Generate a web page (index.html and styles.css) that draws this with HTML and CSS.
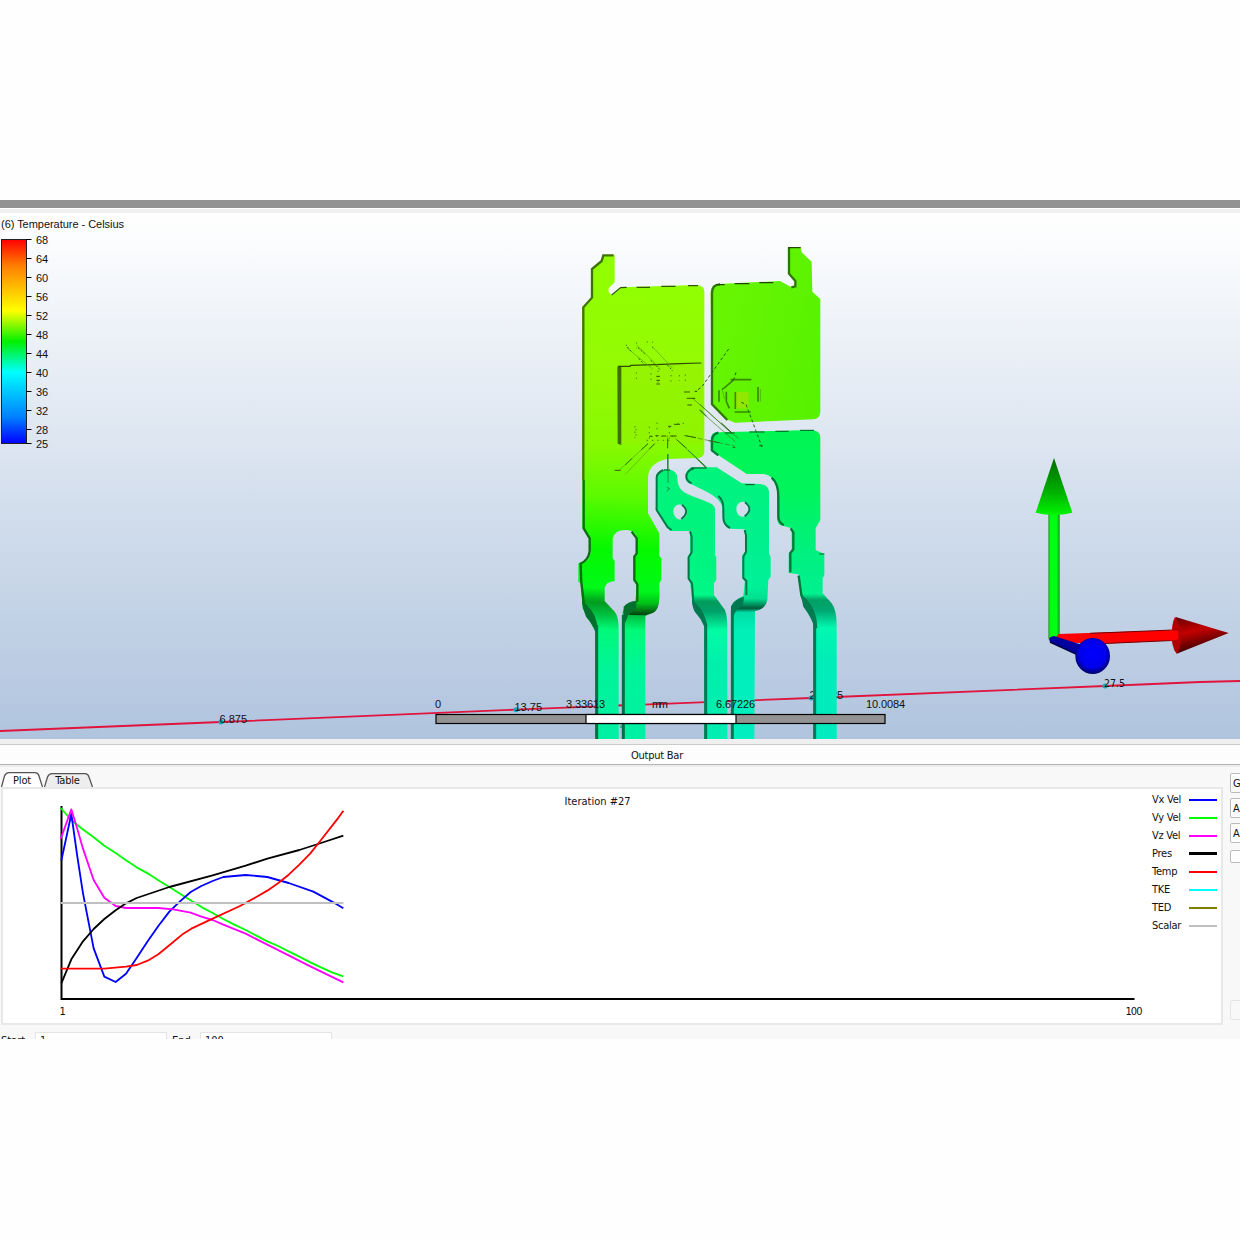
FILE: index.html
```
<!DOCTYPE html>
<html lang="en">
<head>
<meta charset="utf-8">
<title>Temperature results</title>
<link rel="stylesheet" href="styles.css">
</head>
<body>
<main class="app">
  <div class="titlebar"></div>
  <div class="toolstrip"></div>
  <section class="viewport">
    <svg class="scene" viewBox="0 213 1240 526">
      <defs>
        <linearGradient id="scale" x1="0" y1="0" x2="0" y2="1">
          <stop offset="0" stop-color="#f00"/><stop offset=".13" stop-color="#ff8000"/><stop offset=".35" stop-color="#ff0"/><stop offset=".5" stop-color="#00f000"/><stop offset=".65" stop-color="#0ff"/><stop offset=".87" stop-color="#0080ff"/><stop offset="1" stop-color="#00f"/>
        </linearGradient>
        <linearGradient id="plateA" gradientUnits="userSpaceOnUse" x1="250" y1="60" x2="200" y2="1512">
          <stop offset="0" stop-color="#90ff00"/><stop offset=".25" stop-color="#94fa04"/><stop offset=".4" stop-color="#86f900"/><stop offset=".5" stop-color="#5cfa00"/><stop offset=".61" stop-color="#04f800"/><stop offset=".69" stop-color="#00fa18"/><stop offset=".72" stop-color="#009c20"/><stop offset=".745" stop-color="#00c040"/><stop offset=".775" stop-color="#00fa78"/><stop offset=".86" stop-color="#00f49a"/><stop offset="1" stop-color="#00f0a4"/>
        </linearGradient>
        <linearGradient id="plateB" gradientUnits="userSpaceOnUse" x1="455" y1="300" x2="780" y2="380">
          <stop offset="0" stop-color="#68f502"/><stop offset="1" stop-color="#58f200"/>
        </linearGradient>
        <linearGradient id="plateC" gradientUnits="userSpaceOnUse" x1="0" y1="585" x2="0" y2="1512">
          <stop offset="0" stop-color="#00f552"/><stop offset=".2" stop-color="#00f45c"/><stop offset=".4" stop-color="#00f080"/><stop offset=".53" stop-color="#00f090"/><stop offset=".55" stop-color="#00a064"/><stop offset=".585" stop-color="#00a872"/><stop offset=".64" stop-color="#00f8b0"/><stop offset=".75" stop-color="#00ecb8"/><stop offset="1" stop-color="#00ecc0"/>
        </linearGradient>
        <linearGradient id="plateD" gradientUnits="userSpaceOnUse" x1="0" y1="50" x2="0" y2="867">
          <stop offset="0" stop-color="#00f378"/><stop offset=".35" stop-color="#00f480"/><stop offset=".47" stop-color="#00f888"/><stop offset=".495" stop-color="#009c5c"/><stop offset=".53" stop-color="#00a068"/><stop offset=".6" stop-color="#00fda4"/><stop offset=".72" stop-color="#00f0ac"/><stop offset="1" stop-color="#00eeb2"/>
        </linearGradient>
        <linearGradient id="plateE" gradientUnits="userSpaceOnUse" x1="0" y1="50" x2="0" y2="867">
          <stop offset="0" stop-color="#00f37a"/><stop offset=".3" stop-color="#00f090"/><stop offset=".44" stop-color="#00f098"/><stop offset=".485" stop-color="#00e090"/><stop offset=".52" stop-color="#005c3c"/><stop offset=".535" stop-color="#00dca4"/><stop offset=".6" stop-color="#00f0b8"/><stop offset="1" stop-color="#00eec0"/>
        </linearGradient>
        <linearGradient id="legA" x1="0" y1="0" x2="0" y2="1"><stop offset="0" stop-color="#00f020" stop-opacity="0"/><stop offset=".3" stop-color="#00f71c"/><stop offset=".65" stop-color="#00c018"/><stop offset="1" stop-color="#003c10"/></linearGradient>
        <linearGradient id="coneG" x1="0" y1="0" x2="0" y2="1"><stop offset="0" stop-color="#006c00"/><stop offset=".6" stop-color="#00b000"/><stop offset="1" stop-color="#00f400"/></linearGradient>
        <linearGradient id="coneR" x1="0" y1="0" x2=".35" y2="1"><stop offset="0" stop-color="#600000"/><stop offset=".45" stop-color="#c40000"/><stop offset="1" stop-color="#300000"/></linearGradient>
        <linearGradient id="rodG" x1="0" y1="0" x2="1" y2="0"><stop offset="0" stop-color="#28982c"/><stop offset=".2" stop-color="#00ff10"/><stop offset=".75" stop-color="#00ff10"/><stop offset="1" stop-color="#188820"/></linearGradient>
        <radialGradient id="ball" cx=".5" cy=".44" r=".58"><stop offset="0" stop-color="#00f"/><stop offset=".65" stop-color="#0000ec"/><stop offset="1" stop-color="#000058"/></radialGradient>
      </defs>

      <!-- probe line -->
      <polyline points="0,731 221,722 515,709.7 811,698 1105,686 1200,682 1240,681" fill="none" stroke="#e0143c" stroke-width="1.8"/>
      <g fill="#18a8b8"><circle cx="221" cy="722" r="2.5"/><circle cx="516" cy="709.7" r="2.5"/><circle cx="811" cy="698" r="2.5"/><circle cx="1105" cy="686" r="2.5"/></g>
      <g class="scene-text"><text x="219.500" y="723">6.875</text><text x="514.500" y="711">13.75</text><text x="809.500" y="699">20.625</text><text x="1104" y="687" class="light">27.5</text></g>

      <!-- lead frame, upper plates -->
      <g transform="translate(560 235) scale(.33333)">
        <path fill="url(#plateA)" d="M128,60H164V142L146,160V172L155,180L182,157L412,150Q433,152 433,170V650Q433,668 412,669L320,672Q265,685 264,728V835L298,895V963L304,970V1035L298,1045V1080C298,1115 290,1130 275,1135L256,1143V1512H188V1130Q195,1110 232,1100Q237,1070 230,1042L221,1035V965L230,955V905Q222,885 200,885Q165,883 158,910V970L164,978V1038Q136,1040 134,1060V1098L164,1130Q176,1145 176,1180V1512H105V1188L68,1120L62,1045L55,1040V985L75,982Q95,970 90,940V910L67,880V215L97,190V100L125,80Z"/>
        <path fill="url(#legA)" d="M232,1040H298V1080C298,1115 290,1130 275,1135L256,1141L206,1140L225,1107Z"/>
        <path fill="#00702c" d="M66,1098L80,1110Q112,1138 114,1190H106Q98,1168 78,1145Q68,1120 66,1098ZM191,1145V1115Q205,1098 230,1098L228,1120L205,1139L195,1165Z"/>
        <path fill="none" stroke="#3f7200" stroke-width="7" d="M161,61H130L125,78L96,102V188L70,217V735"/>
        <path fill="none" stroke="#08700c" stroke-width="7" d="M71,735V880L89,910V948Q86,976 62,986L64,1042L72,1110M215,890L230,910V955L223,965V1035L232,1048V1100"/>
        <path fill="none" stroke="#007040" stroke-width="9" d="M110,1170V1512M190,1140V1512"/>
        <path fill="none" stroke="#305800" stroke-width="3.500" d="M155,180L182,158L200,157M230,157H270M304,154H346M384,152H414"/>
        <path fill="url(#plateB)" d="M684,37H722L725,52L755,80L757,170L781,192V530Q780,552 760,553L525,563L500,553L455,510L452,170Q455,148 475,147L660,138L695,157L707,150V135L686,115Z"/>
        <path fill="none" stroke="#2e7600" stroke-width="7" d="M687,38V116L706,138V154L694,157M480,148Q456,148 456,175V508L502,555"/>
        <path fill="none" stroke="#204800" stroke-width="3.500" d="M684,38H722M472,149H494M524,146H568M598,143H640"/>
        <path fill="url(#plateC)" d="M470,592L755,585Q781,588 781,605V855L767,880V945L793,957V1020L788,1030V1075L815,1105Q830,1125 830,1170V1512H760V1160L722,1085L716,1018L686,1014V955L695,950V880L660,870Q648,860 652,840V770Q645,720 610,717H560L452,645V610Q455,592 470,592Z"/>
        <path fill="none" stroke="#007838" stroke-width="7" d="M475,593Q456,598 456,617V646L475,661M635,728Q655,745 655,785V842Q655,864 672,870M692,880L700,892V943L691,954V1012M716,1022L724,1080L735,1105"/>
        <path fill="#007c50" d="M722,1078L740,1092Q772,1128 772,1180H763Q758,1152 730,1115Z"/>
        <path fill="none" stroke="#007854" stroke-width="9" d="M764,1165V1512"/>
        <path fill="none" stroke="#005c20" stroke-width="3" d="M495,594H524M568,591H614M646,589H686M720,586H762M778,957H793"/>

        <!-- dies -->
        <path fill="#94f000" opacity=".6" d="M176,395L430,384V628H176Z"/>
        <path fill="#3f7000" d="M172,395L184,393V630L173,626Z"/>
        <path fill="none" stroke="#304c00" stroke-width="3.500" d="M174,394H210L212,391L285,389L360,386L424,384"/>
        <g fill="none" stroke="#3a8800" stroke-width="5"><path d="M512,434H574M594,456V500M477,466V500M486,463L494,458L522,434M499,470V500L508,520M524,531H572"/></g>
        <path fill="none" stroke="#489c08" stroke-width="2" d="M601,462V500M486,463L494,492"/>
        <rect x="524" y="471" width="42" height="50" fill="#90e800"/><path d="M526,471V522" stroke="#508000" stroke-width="5"/>

        <!-- bond wires -->
        <g fill="none" stroke="#3e8410" stroke-width="2">
          <path stroke="#5ca800" d="M200,338L278,402M230,330L298,398M278,336L338,400M264,626L175,708M284,626L196,718M346,610L440,700L470,722"/>
          <path stroke-width="3" stroke="#2c7008" d="M323,610V640M323,658V712M264,626L244,644M216,670L196,690M284,626L268,642M350,614L380,640M410,670L440,700"/>
          <path stroke="#386000" stroke-width="3" stroke-dasharray="6 5" d="M202,336L216,352M236,370L254,390M234,338L254,356M272,376L300,404M322,390L338,408"/>
          <path stroke="#246010" stroke-width="3" stroke-dasharray="9 7" d="M506,342L462,404L425,456L405,470M528,412L520,438M544,502L558,508L606,636"/>
          <path d="M396,488L510,590L536,610M420,508L516,596M418,526L526,620"/>
          <path stroke-width="3" stroke="#206018" d="M484,564L516,594M420,524L440,544M376,602L408,608M446,617L478,623"/>
          <path stroke-dasharray="15 6" d="M372,601L524,633"/>
        </g>
        <g fill="none" stroke="#4c8400" stroke-width="3" stroke-dasharray="4 12">
          <path d="M199,329V345M230,322V340M260,321H278V345M229,412V440M273,415V440M294,407V455M333,420V452M358,420V438M376,418V438M225,574V608M228,582V608M268,575V615M291,563V592M328,575V615M352,565H378M272,604H350M260,616H330"/>
        </g>
        <path fill="none" stroke="#386000" stroke-width="3" d="M372,471H390M404,469H412M380,490H406M382,510H396M324,574H334M342,568H360M289,424H300M289,436H300M289,447H300M268,604H278M286,602H296M305,603H318M330,603H350M164,706H182M518,637H526M598,632H608"/>
      </g>

      <!-- lead frame, signal leads -->
      <g transform="translate(560 450) scale(.33333)">
        <path fill-rule="evenodd" fill="url(#plateD)" d="M290,75Q300,58 325,58Q352,62 352,85C355,128 375,130 440,155Q465,163 465,178V315L469,320V390L462,400V435L495,480Q502,500 502,530V867H432V520L398,465L390,395L383,385V320L390,310V243H330L287,180ZM340,185C340,156 378,156 382,185C378,216 344,216 340,185Z"/>
        <path fill="url(#plateE)" fill-rule="evenodd" d="M378,70Q385,52 400,52H470L545,100L600,102Q625,105 627,125V310L632,320V380L625,390L622,450Q615,480 585,483L583,867H515L513,470Q520,450 550,438L555,390L547,385V315L555,305V238L510,236Q490,230 490,205L487,170Q480,145 440,125L385,98Q372,90 378,70ZM529,178C529,148 568,148 571,178C568,208 531,208 529,178Z"/>
        <g fill="none" stroke="#007848" stroke-width="6">
          <path d="M310,60Q290,70 290,82V180L323,232L335,240M366,164Q392,185 364,207M390,244L395,260V307L386,322V386L396,400L400,454"/>
          <path d="M402,55Q379,62 379,80Q380,94 395,100M475,138Q490,150 490,175V202Q490,225 510,234M555,157Q582,178 554,199M554,240L558,256V306L550,320V384L559,393V435"/>
        </g>
        <path fill="#007850" d="M396,450L410,462Q437,490 442,530H433Q423,505 405,486Q397,474 396,450ZM515,492V468Q523,448 552,440L549,466Q526,478 520,500Z"/>
        <path fill="none" stroke="#007854" stroke-width="9" d="M437,520V867M517,480V867"/>
        <path fill="none" stroke="#004c28" stroke-width="3" d="M392,54H440M556,104H584M312,60H330"/>
        <path fill="none" stroke="#209040" stroke-width="3" d="M324,12V98M384,0L440,52M320,112L329,116L320,124"/>
        <path stroke="#e0143c" stroke-width="5" d="M176,766H185"/>
        <path d="M183,826V834M187,838V848" stroke="#007850" stroke-width="3"/>
      </g>

      <!-- ruler -->
      <g stroke="#000" stroke-width="1.200">
        <rect x="436" y="714.500" width="449" height="9" fill="#939393"/>
        <rect x="586" y="714.500" width="150" height="9" fill="#fff"/>
      </g>
      <g class="scene-text"><text x="435" y="708">0</text><text x="566" y="708" textLength="39">3.33613</text><text x="652" y="708" textLength="16">mm</text><text x="716" y="708" textLength="39">6.67226</text><text x="866" y="708" textLength="39">10.0084</text></g>

      <!-- colour legend -->
      <text class="scene-text" x="1" y="228" textLength="123">(6) Temperature - Celsius</text>
      <rect x="1.500" y="239.500" width="25" height="204" fill="url(#scale)" stroke="#222"/>
      <path stroke="#000" stroke-width="1.200" d="M26,239.500h5.500M26,258.500h5.500M26,277.500h5.500M26,296.500h5.500M26,315.500h5.500M26,334.500h5.500M26,353.500h5.500M26,372.500h5.500M26,391.500h5.500M26,410.500h5.500M26,429.500h5.500M26,443.500h5.500"/>
      <g class="scene-text"><text x="36" y="244">68</text><text x="36" y="263">64</text><text x="36" y="282">60</text><text x="36" y="301">56</text><text x="36" y="320">52</text><text x="36" y="339">48</text><text x="36" y="358">44</text><text x="36" y="377">40</text><text x="36" y="396">36</text><text x="36" y="415">32</text><text x="36" y="434">28</text><text x="36" y="448">25</text></g>

      <!-- axis triad -->
      <g transform="translate(1010 440) scale(.33333)">
        <rect x="115" y="220" width="34" height="378" fill="url(#rodG)"/>
        <path d="M132,54L187,218Q132,231 77,218Z" fill="url(#coneG)"/>
        <path d="M146,582L500,570V601L270,612L190,608L138,592Z" fill="#f00"/>
        <path d="M240,580L490,570M270,611L500,601" stroke="#700000" stroke-width="3"/>
        <path d="M497,531L656,579L500,641Q484,585 497,531Z" fill="url(#coneR)"/>
        <path d="M495,531Q530,575 502,641Q491,637 485,600Q484,550 495,531Z" fill="#b00000"/>
        <path d="M480,571L505,573V598L480,602Z" fill="#f00"/>
        <path d="M132,588L215,614L200,644L120,606Q112,590 132,588Z" fill="#0000a0"/>
        <path d="M120,606L200,643" stroke="#000048" stroke-width="5"/>
        <ellipse cx="248" cy="648" rx="52" ry="54" fill="url(#ball)"/>
      </g>
    </svg>
  </section>

  <header class="output-title">Output Bar</header>

  <section class="output">
    <div class="output-main">
      <nav class="tabs">
        <div class="tab tab-active"><svg viewBox="0 0 42 15"><path d="M.5,15L3.500,4Q5,.7 8,.7H34Q37,.7 38,4L41.500,15" /></svg><span>Plot</span></div>
        <div class="tab tab-table"><svg viewBox="0 0 49 14"><path d="M.5,14L3.500,4Q5,.7 8,.7H41Q44,.7 45,4L48.500,14" /></svg><span>Table</span></div>
      </nav>
      <div class="plot">
        <svg class="chart" viewBox="3 789 1148 234">
          <text x="564.500" y="805" textLength="66">Iteration #27</text>
          <path d="M61.500,806V999H1134.500" fill="none" stroke="#000" stroke-width="2"/>
          <g transform="translate(0 690) scale(.33333)" fill="none" stroke-width="5.500" stroke-linejoin="round">
            <polyline stroke="#0f0" points="182,354 214,390 246,416 280,441 313,467 347,489 378,511 410,532 443,550 475,571 508,591 540,611 574,632 606,652 638,669 670,687 703,704 737,720 769,737 802,754 834,768 866,784 898,800 931,817 963,832 996,847 1030,859"/>
            <polyline stroke="#00f" points="184,512 214,372 232,500 249,610 281,775 313,860 347,876 378,851 410,804 443,754 475,708 508,665 540,634 572,606 604,588 638,573 670,561 737,555 802,561 866,579 940,605 1000,637 1030,655"/>
            <polyline stroke="#f0f" points="182,447 214,358 230,410 249,476 281,570 313,623 347,648 378,654 475,654 520,658 572,668 604,680 638,690 670,704 737,731 802,764 866,796 931,829 1030,877"/>
            <polyline stroke="#000" points="184,880 214,808 249,754 281,717 313,687 347,661 378,640 410,624 508,591 638,556 737,527 802,506 898,480 963,459 1030,437"/>
            <polyline stroke="#f00" points="182,836 313,836 378,830 410,825 443,812 475,793 508,766 550,731 574,716 638,686 720,648 769,621 802,602 834,580 866,554 898,524 931,490 963,450 1013,386 1030,362"/>
            <path stroke="silver" d="M182,639H1030"/>
          </g>
          <text x="59.500" y="1015">1</text><text x="1125.500" y="1015" textLength="17">100</text>
        </svg>
        <ul class="legend">
          <li><span>Vx Vel</span><i class="line blue"></i></li>
          <li><span>Vy Vel</span><i class="line lime"></i></li>
          <li><span>Vz Vel</span><i class="line magenta"></i></li>
          <li><span>Pres</span><i class="line black"></i></li>
          <li><span>Temp</span><i class="line red"></i></li>
          <li><span>TKE</span><i class="line cyan"></i></li>
          <li><span>TED</span><i class="line olive"></i></li>
          <li><span>Scalar</span><i class="line grey"></i></li>
        </ul>
      </div>
      <div class="range"><label>Start:</label><span class="field">1</span><label class="end">End:</label><span class="field">100</span></div>
    </div>
    <aside class="actions">
      <span class="button">G</span><span class="button">A</span><span class="button">A</span><span class="button small"></span><span class="button faint"></span>
    </aside>
  </section>
</main>
</body>
</html>
```
FILE: styles.css
```
* { box-sizing: border-box; }
body { margin: 0; background: #fefefe; color: #111; font: 11px/14px "DejaVu Sans Condensed", "DejaVu Sans", sans-serif; }
.app { width: 1240px; height: 839px; margin-top: 200px; overflow: hidden; background: #f8f8f8; display: flex; flex-direction: column; }
.titlebar { height: 8px; background: #929292; flex: none; }
.toolstrip { height: 5px; background: #f0f0f0; border-top: 1px solid #fff; flex: none; }
.viewport { height: 526px; flex: none; background: linear-gradient(#fff, #b0c4de); }
svg { display: block; }
.scene { width: 1240px; height: 526px; }
.scene-text { font-family: "Liberation Sans", Arial, sans-serif; font-size: 11px; fill: #111; }
.light { font-family: "DejaVu Sans Condensed", sans-serif; font-size: 10.5px; }
.output-title { flex: none; height: 28px; border-top: 5px solid #efefef; border-bottom: 2px solid #ececec; background: #fdfdfd; box-shadow: inset 0 1px #ccc, inset 0 -1px #b5b5b5; text-align: center; line-height: 23px; padding-left: 74px; letter-spacing: -.25px; font-size: 11px; }
.output { display: flex; flex: 1; min-height: 0; }
.output-main { width: 1230px; flex: none; }
.tabs { display: flex; align-items: flex-end; height: 20px; padding-left: 1px; gap: 1px; }
.tab { display: grid; height: 15px; align-items: end; }
.tab > * { grid-area: 1 / 1; }
.tab svg { fill: #eee; stroke: #555; stroke-width: 1.3; }
.tab-active svg { width: 42px; height: 15px; fill: #fff; }
.tab-table svg { width: 49px; height: 14px; }
.tab span { text-align: center; letter-spacing: -.2px; line-height: 13px; font-size: 11px; }
.tab-table span { line-height: 12px; padding-right: 2px; }
.plot { display: flex; width: 1222px; height: 238px; margin-left: 1px; background: #fff; border: 2px solid #e8e8e8; }
.chart { width: 1148px; height: 234px; flex: none; }
.chart text { font-size: 11px; fill: #111; }
.legend { list-style: none; margin: 0; padding: 2px 0 0 1px; width: 67px; }
.legend li { display: flex; align-items: center; height: 18px; }
.legend span { width: 37px; letter-spacing: -.25px; font-size: 11px; white-space: nowrap; }
.line { width: 28px; height: 2px; margin-top: -1px; }
.blue { background: #00f; }
.lime { background: #0f0; }
.magenta { background: #f0f; }
.black { background: #000; height: 3px; }
.red { background: #f00; }
.cyan { background: #0ff; }
.olive { background: #808000; }
.grey { background: silver; }
.range { display: flex; padding: 7px 0 0 1px; height: 30px; }
.range label { width: 34px; padding-top: 2px; font-size: 11px; }
.range .end { margin-left: 5px; width: 28px; }
.field { width: 132px; height: 24px; padding: 1px 4px; background: #fff; border: 1px solid #e4e4e4; font-size: 11px; }
.actions { width: 10px; flex: none; overflow: hidden; padding-top: 6px; }
.button { display: block; width: 60px; height: 20px; margin-bottom: 5px; padding: 3px 0 0 2px; background: #fdfdfd; border: 1px solid #bbb; border-radius: 2px; font-size: 11px; }
.small { height: 13px; margin-top: 7px; }
.faint { margin-top: 137px; border-color: #e4e4e4; background: #f8f8f8; }
```
